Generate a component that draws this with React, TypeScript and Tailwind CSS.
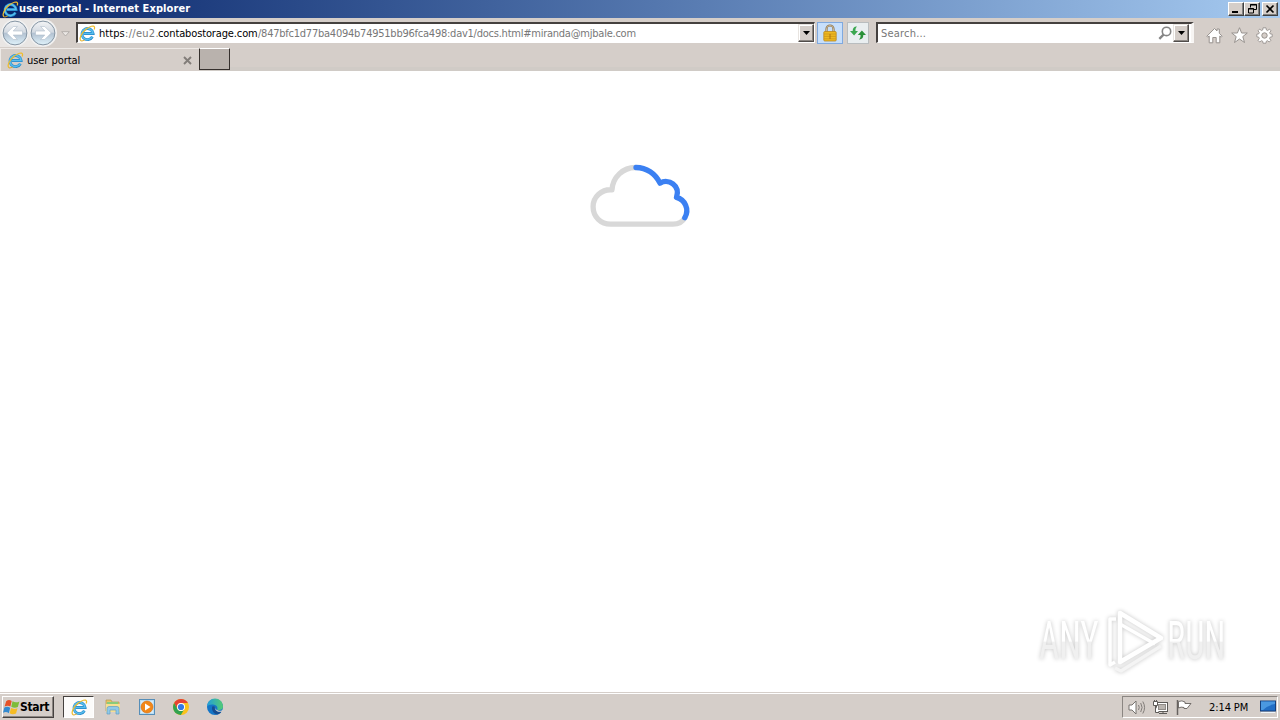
import React from 'react';

interface IconProps {
  className?: string;
}

const IeIcon: React.FC<IconProps> = ({ className }) => (
  <svg className={className} viewBox="0 0 18 18" fill="none">
    <path d="M14.2 12.5A5.9 5.9 0 1 1 14.9 9H5" stroke="#2185c9" strokeWidth="3" />
    <path d="M14.1 12.4A5.9 5.9 0 1 1 14.8 9H5" stroke="#58beed" strokeWidth="1.7" />
    <path d="M2 16.6C-.4 14.5 3 8.2 7.4 4.6C11.4 1.3 15.8 0 16.4 2.2C16.6 3 16.4 3.9 16 4.7" stroke="#f0bd2c" strokeWidth="1.3" />
    <path d="M2 16.6C3 17.2 4.7 16.6 6 15.8" stroke="#dca620" strokeWidth="1.1" />
  </svg>
);

const NavArrow: React.FC<{ forward?: boolean }> = ({ forward }) => (
  <svg className="h-[28px] w-[28px] shrink-0" viewBox="0 0 28 28">
    <defs>
      <linearGradient id={forward ? 'navF' : 'navB'} x1="0" y1="0" x2="0" y2="1">
        <stop offset="0" stopColor="#f4f5f6" />
        <stop offset=".46" stopColor="#d3dae2" />
        <stop offset=".52" stopColor="#b3c2d2" />
        <stop offset="1" stopColor="#e0f3fb" />
      </linearGradient>
    </defs>
    <circle cx="14" cy="14" r="13.7" fill="#f1f1f1" />
    <circle cx="14" cy="14" r="11.9" fill={forward ? 'url(#navF)' : 'url(#navB)'} stroke="#8494a3" strokeWidth="1" />
    <path
      d="M5.8 14L12.3 7.5H16.4L12.2 12H21.5V16H12.2L16.4 20.5H12.3Z"
      fill="#fff"
      stroke="#b0becb"
      strokeWidth=".6"
      transform={forward ? 'translate(28 0) scale(-1 1)' : undefined}
    />
  </svg>
);

const DropButton = () => (
  <div className="flex h-[18px] w-[16px] shrink-0 items-center justify-center border border-t-[#e8e4e0] border-r-[#504c4a] border-b-[#504c4a] border-l-[#e8e4e0] bg-[#d5cec9] shadow-[inset_-1px_-1px_#8b8682,inset_1px_1px_#fff]">
    <svg className="h-[4px] w-[7px]" viewBox="0 0 7 4"><path d="M0 0H7L3.5 4Z" fill="#000" /></svg>
  </div>
);

const CaptionButton: React.FC<{ children: React.ReactNode }> = ({ children }) => (
  <div className="h-[14px] w-[16px] border border-t-white border-r-[#404040] border-b-[#404040] border-l-white bg-[#d5cec9] shadow-[inset_-1px_-1px_#808080]">
    <svg className="h-[12px] w-[14px]" viewBox="0 0 14 12" fill="none" stroke="#000">{children}</svg>
  </div>
);

const TitleBar = () => (
  <div className="flex h-[18px] items-center bg-linear-to-r from-[#0a246a] to-[#a6caf0] pr-[2px] pl-[2px]">
    <IeIcon className="h-[17px] w-[17px] shrink-0" />
    <span className="text-[11px] leading-[18px] font-bold tracking-[0.09px] whitespace-nowrap text-white">user portal - Internet Explorer</span>
    <div className="ml-auto flex">
      <CaptionButton><path d="M3 9H9" strokeWidth="2" /></CaptionButton>
      <CaptionButton>
        <path d="M5.5 4.5V1.5H11.5V6.5H9M5 2H12M3.5 5.5H8.5V10H3.5ZM3 6H9" />
      </CaptionButton>
      <div className="w-[2px]" />
      <CaptionButton><path d="M3.5 2.5L10.5 9.5M10.5 2.5L3.5 9.5" strokeWidth="1.7" /></CaptionButton>
    </div>
  </div>
);

const AddressBar = () => (
  <div className="flex h-[21px] w-[739px] items-center border-t-2 border-r border-b border-l-2 border-t-[#45413f] border-r-white border-b-white border-l-[#45413f] bg-white">
    <IeIcon className="ml-px h-[17px] w-[17px] shrink-0" />
    <div className="ml-[3px] flex flex-1 pt-[2px] text-[11px] leading-[16px] whitespace-nowrap text-[#777]">
      <span className="w-[26px] tracking-[0.05px] text-black">https</span>
      <span className="w-[33px] tracking-[0.3px]">://eu2.</span>
      <span className="w-[100px] tracking-[-0.13px] text-black">contabostorage.com</span>
      <span className="tracking-[-0.24px]">/847bfc1d77ba4094b74951bb96fca498:dav1/docs.html#miranda@mjbale.com</span>
    </div>
    <DropButton />
  </div>
);

const Toolbar = () => (
  <div className="flex h-[30px] items-start bg-[#d5cec9] pt-px">
    <div className="flex rounded-r-full bg-[#e9e6e4] pl-px">
      <NavArrow />
      <NavArrow forward />
    </div>
    <svg className="mt-[12px] ml-[4px] h-[6px] w-[9px]" viewBox="0 0 9 6">
      <path d="M.7.7H8.3L4.5 5Z" fill="#ebe7e4" stroke="#aaa5a1" strokeWidth=".8" />
    </svg>
    <div className="mt-[3px] ml-[6px] flex">
      <AddressBar />
      <div className="ml-[2px] flex h-[22px] w-[26px] items-center justify-center border border-[#7fa9df] bg-[#c7dffb]">
        <svg className="h-[18px] w-[14px]" viewBox="0 0 14 18">
          <path d="M3.5 8V5a3.5 3.5 0 0 1 7 0V8" fill="none" stroke="#8d7652" strokeWidth="2.2" />
          <path d="M3.5 8V5a3.5 3.5 0 0 1 7 0V8" fill="none" stroke="#d8c7a4" strokeWidth=".8" />
          <rect x=".8" y="7.5" width="12.4" height="9.5" rx="1" fill="#eeb922" stroke="#b9871f" strokeWidth=".8" />
          <path d="M1 10H13M1 12.4H13M1 14.8H13" stroke="#d09a1c" strokeWidth=".9" />
          <path d="M7 10V15" stroke="#ad7511" />
        </svg>
      </div>
      <div className="ml-[4px] flex h-[22px] w-[22px] items-center justify-center border border-[#b9bdbf] bg-[#e9eef0]">
        <svg className="h-[16px] w-[18px]" viewBox="0 0 18 16">
          <path d="M8 1.6C5.2 1.4 3.7 3 3.7 6H1L5.1 10.4L9 6H6.5C6.3 4 6.7 2.8 8 1.6Z" fill="#3aa74f" />
          <path d="M10 14.4C12.8 14.6 14.3 13 14.3 10H17L12.9 5.6L8.8 10H11.5C11.7 12 11.3 13.2 10 14.4Z" fill="#2a9139" />
        </svg>
      </div>
      <div className="ml-[7px] flex h-[21px] w-[318px] items-center border-t-2 border-r-[3px] border-b border-l-2 border-t-[#45413f] border-r-[#f7f5f3] border-b-white border-l-[#45413f] bg-white pr-[2px]">
        <span className="ml-[3px] pt-[2px] text-[11px] leading-[16px] tracking-[0.2px] text-[#777]">Search...</span>
        <svg className="ml-auto h-[14px] w-[14px]" viewBox="0 0 14 14" fill="none" stroke="#858585">
          <circle cx="8.5" cy="5.4" r="4.2" strokeWidth="1.6" />
          <path d="M5.6 8.6L1.3 12.9" strokeWidth="2.3" />
        </svg>
        <div className="ml-px flex"><DropButton /></div>
      </div>
    </div>
    <div className="mt-[8px] ml-[12px] flex gap-[8px]">
      <svg className="h-[17px] w-[17px]" viewBox="0 0 17 17">
        <path d="M.9 9.2L8.5 1.5L11 4V2H13.3V6.3L16.1 9.2L15.2 10.2L13.8 9V15.8H10.2V10.5H6.8V15.8H3.2V9L1.8 10.2Z" fill="#fff" stroke="#97928e" />
      </svg>
      <svg className="h-[17px] w-[17px]" viewBox="0 0 17 17">
        <path d="M8.5.7L10.6 6H16.3L11.8 9.6L13.5 15.5L8.5 12L3.5 15.5L5.2 9.6L.7 6H6.4Z" fill="#fff" stroke="#97928e" />
      </svg>
      <svg className="h-[17px] w-[17px]" viewBox="0 0 17 17">
        <path d="M7 .8H10L10.4 3L11.7 3.5L13.4 2.1L15 3.8L13.7 5.6L14.1 6.8L16.2 7.2V9.8L14.1 10.2L13.6 11.5L14.9 13.3L13.2 15L11.5 13.7L10.3 14.2L10 16.2H7L6.7 14.2L5.5 13.7L3.7 15L2 13.3L3.3 11.5L2.8 10.2L.8 9.8V7.2L2.8 6.8L3.3 5.6L2 3.8L3.7 2.1L5.4 3.5L6.7 3Z" fill="#fff" stroke="#97928e" strokeWidth=".9" />
        <circle cx="8.5" cy="8.5" r="2.7" fill="#d5cec9" stroke="#97928e" />
      </svg>
    </div>
  </div>
);

const TabRow = () => (
  <div className="flex h-[23px] bg-[#d5cec9] shadow-[inset_0_-4px_#d0cbc6]">
    <div className="flex h-[23px] w-[199px] items-center border-t border-l border-[#eeeae7] bg-[#d5cec9] pl-[6px]">
      <IeIcon className="h-[17px] w-[17px] shrink-0" />
      <span className="ml-[3px] pt-[2px] text-[11px] tracking-[-0.06px] text-black">user portal</span>
      <svg className="mr-[7px] ml-auto h-[9px] w-[9px]" viewBox="0 0 9 9"><path d="M1 1L8 8M8 1L1 8" stroke="#827d79" strokeWidth="1.9" /></svg>
    </div>
    <div className="h-[22px] w-[31px] border border-t-white border-r-[#35302d] border-b-[#35302d] border-l-[#35302d] bg-[#b9b2ad]" />
  </div>
);

const CloudLoader = () => (
  <svg className="mt-[90px] h-[70px] w-[110px]" viewBox="585 161 110 70" fill="none" strokeWidth="5.3" strokeLinecap="round" strokeLinejoin="round">
    <path d="M635.5 167.5C623 167.5 612.7 177 612 189.8C601.5 189 593.1 197 593.1 206.8C593.1 217 601 224.2 610.5 224.2H673C678 224.2 682.5 222 684.8 217.8" stroke="#d8d8d8" />
    <path d="M636 167.5C646.5 167.5 655.5 173.7 660 183.2C668.5 178 680.5 185.5 676.5 197.4C684.7 199.5 689.8 209 684.8 217.8" stroke="#3b80f2" />
  </svg>
);

const Watermark = () => (
  <div className="absolute right-[42px] bottom-[15px] flex h-[72px] w-[202px] items-center text-transparent drop-shadow-[0_0_2px_#c4c4c4]">
    <div className="flex w-[71px] shrink-0 pl-[3px]">
      <span className="w-max shrink-0 origin-left scale-x-[0.66] bg-linear-to-b from-white from-50% to-[#f0f0f0] to-52% bg-clip-text font-['Roboto'] text-[53px] leading-[66px]">ANY</span>
    </div>
    <svg className="h-[66px] w-[58px] shrink-0" viewBox="0 0 58 66" fill="none" stroke="#fff" strokeWidth="4.5" strokeLinejoin="round">
      <path d="M9 11H3V57L8 54" strokeWidth="3.5" />
      <path d="M13 5L54 30L13 54Z" />
      <path d="M13 16L48 36" strokeWidth="3.5" />
      <path d="M8 60L14 63L54 38" stroke="#f4f4f4" strokeWidth="3.5" />
    </svg>
    <div className="ml-[2px] flex w-[67px] shrink-0">
      <span className="w-max shrink-0 origin-left scale-x-[0.645] bg-linear-to-b from-white from-50% to-[#f0f0f0] to-52% bg-clip-text font-['Roboto'] text-[53px] leading-[66px]">RUN</span>
    </div>
  </div>
);

const ExplorerIcon = () => (
  <svg className="h-[18px] w-[18px]" viewBox="0 0 18 18">
    <path d="M2 2H7L8 4H15V13H2Z" fill="#e8c565" stroke="#b59a50" strokeWidth=".7" />
    <path d="M3 4H14V8H3Z" fill="#8acb7b" />
    <path d="M2 6H16V14H2Z" fill="#f6df92" />
    <path d="M3 16V10.5Q3 8.5 5 8.5H13Q15 8.5 15 10.5V16H12V12H6V16Z" fill="#90c9e9" stroke="#619fc3" strokeWidth=".7" />
  </svg>
);

const PlayerIcon = () => (
  <svg className="h-[18px] w-[18px]" viewBox="0 0 18 18">
    <rect x="1.5" y="1.5" width="15" height="15" fill="#b9def5" stroke="#568eb8" />
    <rect x="3" y="3" width="12" height="12" fill="#d6ecfa" />
    <circle cx="9" cy="9" r="6" fill="#f28718" stroke="#d5690c" strokeWidth=".6" />
    <path d="M7 5.5L12.5 9L7 12.5Z" fill="#fff" />
  </svg>
);

const ChromeIcon = () => (
  <svg className="h-[18px] w-[18px]" viewBox="0 0 18 18">
    <circle cx="9" cy="9" r="8" fill="#fbc21b" />
    <path d="M2.1 5A8 8 0 0 1 15.9 5H9A4 4 0 0 0 5.5 11Z" fill="#e64234" />
    <path d="M2.1 5A8 8 0 0 0 8.8 17L12.5 11A4 4 0 0 1 5.5 11Z" fill="#31a250" />
    <circle cx="9" cy="9" r="4" fill="#fff" />
    <circle cx="9" cy="9" r="3.1" fill="#3478e5" />
  </svg>
);

const EdgeIcon = () => (
  <svg className="h-[18px] w-[18px]" viewBox="0 0 18 18">
    <defs>
      <linearGradient id="edgeTop"><stop stopColor="#229edb" /><stop offset="1" stopColor="#54cc72" /></linearGradient>
    </defs>
    <circle cx="9" cy="9" r="8" fill="#1475c7" />
    <path d="M1 8.5A8 8 0 0 1 17 8.5C17 12 13.4 12.7 11 11.5C12.2 10 11 7.2 8 6.7C5 6.2 2 7 1 8.5Z" fill="url(#edgeTop)" />
    <path d="M6.5 8.2C5 11 7 15.5 11 16.5C13.5 16 15 14.7 15.7 13.2C12 15 7.9 12 9 8.5Z" fill="#174d91" />
    <path d="M9 8C8 10 10 13 15.2 12.8L17.2 11.5V14L14.6 13.8C11 14.3 8 11.5 9 8Z" fill="#d5cec9" />
  </svg>
);

const Taskbar = () => (
  <div className="flex h-[28px] border-t border-[#d5cec9] bg-[#d5cec9] shadow-[inset_0_1px_#fff]">
    <div className="mt-[3px] ml-[2px] flex h-[22px] w-[52px] items-center border border-t-white border-r-[#45413f] border-b-[#45413f] border-l-white shadow-[inset_-1px_-1px_#8b8682]">
      <svg className="h-[18px] w-[18px] shrink-0" viewBox="0 0 17 17">
        <path d="M3 3Q5.5 1 8.2 2.8L7 8Q4.5 6.5 1.5 8Z" fill="#e65228" />
        <path d="M9 3Q12 5 15.5 3.2L14 8.4Q11 10 7.8 8.2Z" fill="#7dbc38" />
        <path d="M1.3 9Q4 7.5 6.8 9.2L5.5 14.3Q3 12.5 0 14Z" fill="#348ad0" />
        <path d="M7.6 9.5Q10.5 11 13.7 9.6L12.3 14.7Q9 16.2 6.3 14.5Z" fill="#f6bc24" />
      </svg>
      <span className="-ml-px text-[12px] leading-[18px] font-bold tracking-[-0.35px] text-black">Start</span>
    </div>
    <div className="mt-[3px] ml-[9px] flex h-[22px] w-[31px] items-center justify-center border border-t-[#45413f] border-r-white border-b-white border-l-[#45413f] bg-[#fcfbfa]">
      <IeIcon className="ml-px h-[17px] w-[17px]" />
    </div>
    <div className="mt-[5px] ml-[10px] flex gap-[16px]">
      <ExplorerIcon />
      <PlayerIcon />
      <ChromeIcon />
      <EdgeIcon />
    </div>
    <div className="mt-[3px] mr-[2px] ml-auto flex h-[22px] w-[156px] items-center border border-t-[#8b8682] border-r-white border-b-white border-l-[#8b8682] pl-[5px]">
      <svg className="h-[17px] w-[18px]" viewBox="0 0 18 17" fill="none" stroke="#77736f">
        <path d="M1 6H4L8 2V15L4 11H1Z" fill="#fff" />
        <path d="M10.5 6Q12 8.5 10.5 11M12.7 4Q15.5 8.5 12.7 13M14.8 2.5Q18.3 8.5 14.8 14.5" strokeWidth=".9" />
      </svg>
      <svg className="ml-[6px] h-[17px] w-[17px]" viewBox="0 0 17 17" fill="none" stroke="#5d5a57">
        <rect x="4.5" y="3.5" width="11" height="9" fill="#fff" />
        <rect x="6.5" y="5.5" width="7" height="5" fill="#b9b4af" stroke="#908b87" />
        <path d="M7 14.5H15M11 12V14" />
        <path d="M1.5 2.5H5.5V6.5H1.5ZM2.5 1V2M4.5 1V2M3.5 7V13.5H7" fill="#fff" />
      </svg>
      <svg className="ml-[7px] h-[17px] w-[17px]" viewBox="0 0 17 17" stroke="#67625f">
        <path d="M1.5 1V16" strokeWidth="1.5" />
        <path d="M2.5 2.5Q6 1 9 3V4.5H15L13 7L11 9.5H8V8.5Q5 7.5 2.5 9Z" fill="#fff" strokeWidth=".9" />
      </svg>
      <span className="ml-[16px] w-[42px] pt-[2px] text-[11px] tracking-[-0.1px] whitespace-nowrap text-black">2:14 PM</span>
      <svg className="ml-[9px] h-[16px] w-[16px] shrink-0" viewBox="0 0 16 16">
        <rect x=".5" y="2" width="15" height="10" fill="#226ec5" stroke="#153f7d" />
        <path d="M1 2.5H15V5Q8 6 3 11H1Z" fill="#4a98e1" />
        <path d="M1 13.5H15" stroke="#eef4f9" />
      </svg>
    </div>
  </div>
);

export default function App() {
  return (
    <div className="flex h-screen w-screen flex-col overflow-hidden bg-white font-['DejaVu_Sans_Condensed','DejaVu_Sans',sans-serif] font-stretch-condensed">
      <TitleBar />
      <Toolbar />
      <TabRow />
      <main className="relative flex flex-1 items-start justify-center bg-white">
        <CloudLoader />
        <Watermark />
      </main>
      <Taskbar />
    </div>
  );
}
